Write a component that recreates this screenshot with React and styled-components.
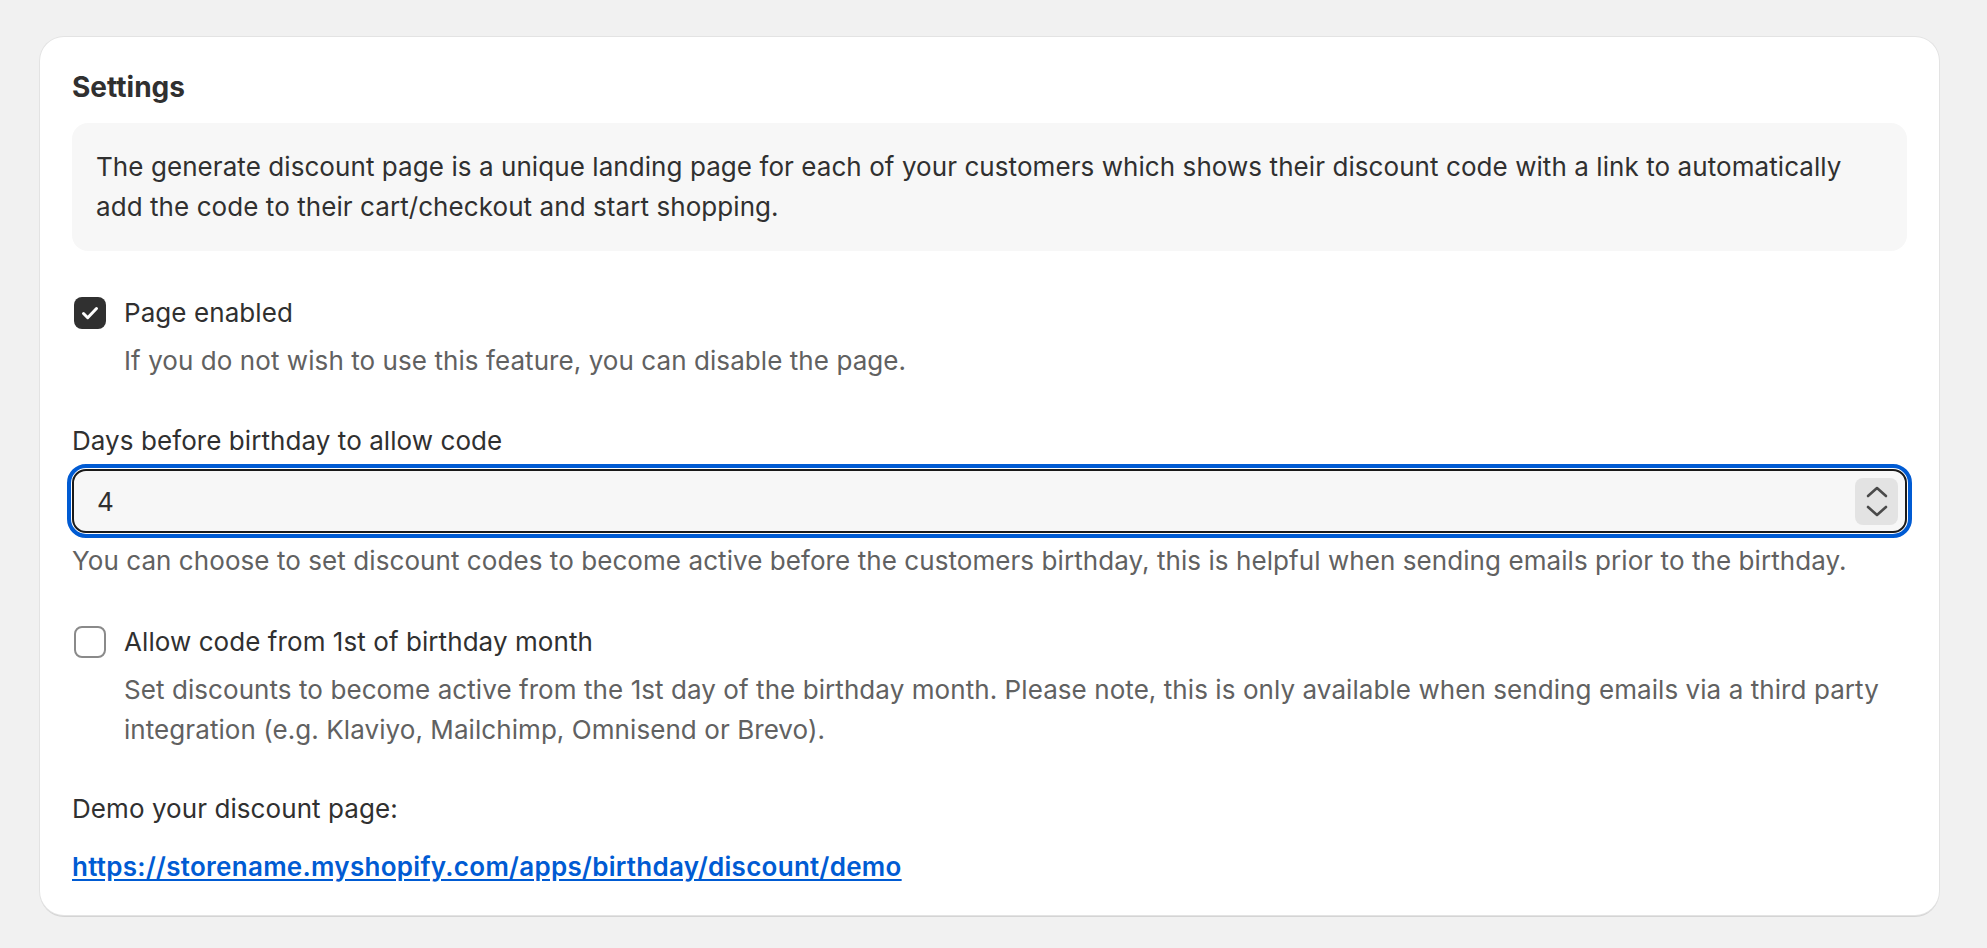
import React from 'react';
import styled, { createGlobalStyle } from 'styled-components';

const GlobalStyle = createGlobalStyle`
  html, body {
    margin: 0;
    padding: 0;
    background: #f1f1f1;
    font-family: Inter, 'Noto Sans', sans-serif;
    color: #303030;
  }
`;

const Page = styled.div`
  padding: 37px 48px 30px 40px;
`;

const Card = styled.section`
  background: #fff;
  border-radius: 24px;
  padding: 30px 32px 28px;
  box-shadow: 0 0 0 1px #e3e3e3, 0 2px 0 0 #d4d4d4;
  display: flex;
  flex-direction: column;
  letter-spacing: 0.07px;
`;

const Title = styled.h2`
  margin: 0 0 16px;
  font-size: 28px;
  line-height: 40px;
  font-weight: 650;
  letter-spacing: 0;
`;

const Info = styled.div`
  background: #f7f7f7;
  border-radius: 16px;
  padding: 24px;
  font-size: 26px;
  line-height: 40px;
  margin-bottom: 42px;
`;

const Choice = styled.div`
  display: grid;
  grid-template-columns: 52px 1fr;
  row-gap: 8px;
  margin-bottom: ${({ $gap }) => $gap}px;
`;

const Box = styled.span`
  margin: 4px 0 0 2px;
  width: 32px;
  height: 32px;
  box-sizing: border-box;
  border-radius: 8px;
  display: flex;
  align-items: center;
  justify-content: center;
  background: ${({ $checked }) => ($checked ? '#303030' : '#fff')};
  border: ${({ $checked }) => ($checked ? 'none' : '2px solid #8a8a8a')};
`;

const Label = styled.span`
  font-size: 26px;
  line-height: 40px;
`;

const Help = styled.p`
  grid-column: ${({ $indent }) => ($indent ? '2' : '1 / -1')};
  margin: 0;
  font-size: 26px;
  line-height: 40px;
  color: #616161;
`;

const Field = styled.div`
  display: flex;
  flex-direction: column;
  gap: 8px;
  margin-bottom: 41px;
`;

const Input = styled.div`
  height: 64px;
  box-sizing: border-box;
  border: 2px solid #1a1a1a;
  border-radius: 14px;
  outline: 4px solid #005bd3;
  outline-offset: 1px;
  background: #f7f7f7;
  display: flex;
  align-items: center;
  padding: 0 7px 0 23px;
  font-size: 26px;
`;

const Value = styled.span`
  flex: 1;
`;

const Spinner = styled.div`
  width: 43px;
  height: 47px;
  border-radius: 8px;
  background: #e3e3e3;
  display: flex;
  flex-direction: column;
  align-items: center;
  justify-content: center;
  gap: 7px;
`;

const Plain = styled.p`
  margin: 0 0 ${({ $gap }) => $gap}px;
  font-size: 26px;
  line-height: 40px;
`;

const Link = styled.a`
  font-size: 26px;
  line-height: 40px;
  font-weight: 600;
  letter-spacing: 0.28px;
  color: #005bd3;
  text-decoration: underline;
  text-underline-offset: 3px;
  align-self: flex-start;
`;

const Check = () => (
  <svg width="32" height="32" viewBox="0 0 32 32" fill="none">
    <path d="M9.5 16.5l4.2 4.2L22.5 11.5" stroke="#fff" strokeWidth="3" strokeLinecap="round" strokeLinejoin="round" />
  </svg>
);

const Chevron = ({ up }) => (
  <svg width="22" height="12" viewBox="0 0 22 12" fill="none">
    <path d={up ? 'M2 10l9-8 9 8' : 'M2 2l9 8 9-8'} stroke="#4a4a4a" strokeWidth="2.6" strokeLinecap="round" strokeLinejoin="round" />
  </svg>
);

export default function App() {
  return (
    <Page>
      <GlobalStyle />
      <Card>
        <Title>Settings</Title>
        <Info>
          The generate discount page is a unique landing page for each of your customers which shows their discount code
          with a link to automatically add the code to their cart/checkout and start shopping.
        </Info>

        <Choice $gap={40}>
          <Box $checked>
            <Check />
          </Box>
          <Label>Page enabled</Label>
          <Help $indent>If you do not wish to use this feature, you can disable the page.</Help>
        </Choice>

        <Field>
          <Label>Days before birthday to allow code</Label>
          <Input>
            <Value>4</Value>
            <Spinner>
              <Chevron up />
              <Chevron />
            </Spinner>
          </Input>
          <Help>
            You can choose to set discount codes to become active before the customers birthday, this is helpful when
            sending emails prior to the birthday.
          </Help>
        </Field>

        <Choice $gap={39}>
          <Box />
          <Label>Allow code from 1st of birthday month</Label>
          <Help $indent>
            Set discounts to become active from the 1st day of the birthday month. Please note, this is only available
            when sending emails via a third party integration (e.g. Klaviyo, Mailchimp, Omnisend or Brevo).
          </Help>
        </Choice>

        <Plain $gap={18}>Demo your discount page:</Plain>
        <Link href="#">https://storename.myshopify.com/apps/birthday/discount/demo</Link>
      </Card>
    </Page>
  );
}
